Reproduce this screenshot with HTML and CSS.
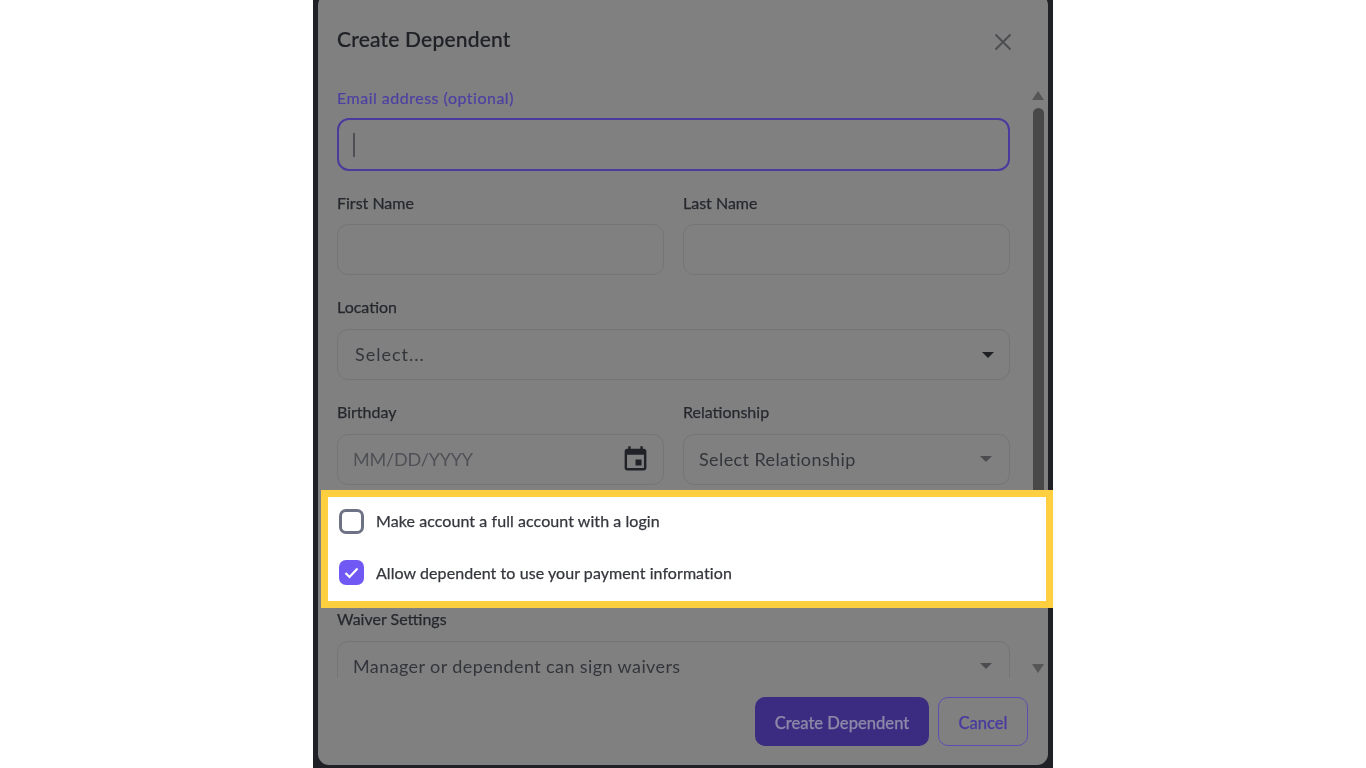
FILE: index.html
```html
<!DOCTYPE html>
<html lang="en">
<head>
    <meta charset="UTF-8">
    <meta name="viewport" content="width=device-width, initial-scale=1.0">
    <title>Create Dependent</title>
    <link rel="stylesheet" href="styles.css">
</head>
<body>
    <div class="backdrop">
        <div class="modal">
            <div class="modal-header">
                <h1 class="modal-title">Create Dependent</h1>
                <svg class="close-icon" viewBox="0 0 18 18" aria-label="Close">
                    <path d="M1.5 1.5l15 15M16.5 1.5l-15 15"/>
                </svg>
            </div>

            <div class="modal-body">
                <form class="form">
                    <div class="field">
                        <label class="label label-active">Email address (optional)</label>
                        <div class="input input-active"><span class="cursor"></span></div>
                    </div>

                    <div class="field-row">
                        <div class="field">
                            <label class="label">First Name</label>
                            <div class="input"></div>
                        </div>
                        <div class="field">
                            <label class="label">Last Name</label>
                            <div class="input"></div>
                        </div>
                    </div>

                    <div class="field">
                        <label class="label label-wide">Location</label>
                        <div class="input input-location">
                            <span class="value">Select...</span>
                            <span class="caret caret-dark"></span>
                        </div>
                    </div>

                    <div class="field-row">
                        <div class="field">
                            <label class="label label-wide">Birthday</label>
                            <div class="input">
                                <span class="value value-date">MM/DD/YYYY</span>
                                <svg class="calendar-icon" viewBox="0 0 24 24">
                                    <path d="M17 12h-5v5h5v-5zM16 1v2H8V1H6v2H5c-1.11 0-1.99.9-1.99 2L3 19c0 1.1.89 2 2 2h14c1.1 0 2-.9 2-2V5c0-1.1-.9-2-2-2h-1V1h-2zm3 18H5V8h14v11z"/>
                                </svg>
                            </div>
                        </div>
                        <div class="field">
                            <label class="label label-wide">Relationship</label>
                            <div class="input">
                                <span class="value">Select Relationship</span>
                                <span class="caret"></span>
                            </div>
                        </div>
                    </div>

                    <div class="checks-space"></div>

                    <div class="field">
                        <label class="label label-wide">Waiver Settings</label>
                        <div class="input">
                            <span class="value">Manager or dependent can sign waivers</span>
                            <span class="caret"></span>
                        </div>
                    </div>
                </form>

                <div class="scrollbar">
                    <span class="arrow-up"></span>
                    <span class="thumb"></span>
                    <span class="arrow-down"></span>
                </div>
            </div>

            <div class="modal-footer">
                <button class="btn btn-primary">Create Dependent</button>
                <button class="btn btn-cancel">Cancel</button>
            </div>
        </div>

        <div class="highlight">
            <div class="check-row">
                <span class="checkbox"></span>
                <span class="check-label check-label-first">Make account a full account with a login</span>
            </div>
            <div class="check-row">
                <span class="checkbox checkbox-on">
                    <svg viewBox="0 0 25 25"><path d="M6.5 13l4 4 8-8.5"/></svg>
                </span>
                <span class="check-label">Allow dependent to use your payment information</span>
            </div>
        </div>
    </div>
</body>
</html>
```

FILE: styles.css
```css
* {
    box-sizing: border-box;
}

body {
    display: flex;
    justify-content: center;
    height: 100vh;
    margin: 0;
    overflow: hidden;
    background-color: #fff;
    font-family: "Lato", "Liberation Sans", sans-serif;
    color: #24262c;
}

.backdrop {
    position: relative;
    width: 740px;
    height: 768px;
    padding: 0 5px;
    overflow: hidden;
    background-color: #1f2126;
    filter: blur(0.4px);
}

.modal {
    display: flex;
    flex-direction: column;
    width: 730px;
    height: 771px;
    margin-top: -6px;
    border-radius: 11px;
    background-color: #808080;
}

.modal-header {
    display: flex;
    justify-content: space-between;
    height: 91px;
    padding: 32px 36px 0 19px;
}

.modal-title {
    margin: 0;
    font-size: 21px;
    line-height: 26px;
    font-weight: 500;
    letter-spacing: 0.2px;
    color: #1f2126;
    -webkit-text-stroke: 0.2px #1f2126;
}

.close-icon {
    width: 18px;
    height: 18px;
    margin-top: 7px;
    fill: none;
    stroke: #4d4e52;
    stroke-width: 2;
}

.modal-body {
    display: flex;
    height: 593px;
    overflow: hidden;
}

.form {
    display: flex;
    flex-direction: column;
    flex: none;
    gap: 22px;
    width: 692px;
    padding: 3px 0 0 19px;
}

.field-row {
    display: grid;
    grid-template-columns: 327px 327px;
    gap: 19px;
}

.label {
    display: block;
    margin-bottom: 11px;
    font-size: 16px;
    line-height: 20px;
    color: #26282e;
    -webkit-text-stroke: 0.25px #26282e;
}

.label-wide {
    margin-bottom: 12px;
}

.label-active {
    margin-bottom: 10px;
    letter-spacing: 0.5px;
    color: #4d3fa3;
    -webkit-text-stroke: 0.2px #4d3fa3;
}

.input {
    display: flex;
    flex: none;
    justify-content: space-between;
    align-items: center;
    height: 51px;
    padding: 0 17px 2px 15px;
    border: 1px solid #757575;
    border-radius: 11px;
}

.input-active {
    height: 53px;
    padding: 0 15px 0 14px;
    border: 2px solid #4a3a9e;
    border-radius: 12px;
}

.input-location {
    padding: 0 15px 2px 17px;
}

.input-location .value {
    letter-spacing: 1px;
}

.cursor {
    width: 2px;
    height: 24px;
    background-color: #4f4f55;
}

.value {
    font-size: 18px;
    letter-spacing: 0.4px;
    color: #33353b;
}

.value-date {
    color: #4f5056;
    letter-spacing: -0.2px;
}

.caret {
    width: 0;
    height: 0;
    border-left: 6px solid transparent;
    border-right: 6px solid transparent;
    border-top: 6px solid #4c4c50;
}

.caret-dark {
    margin-top: 2px;
    border-top-color: #1f2024;
}

.calendar-icon {
    width: 29px;
    height: 29px;
    margin: 2px -4px 0 0;
    fill: #202227;
}

.checks-space {
    flex: none;
    height: 80px;
}

.scrollbar {
    display: flex;
    flex-direction: column;
    align-items: center;
    flex: none;
    width: 12px;
    margin-left: 22px;
    padding-top: 6px;
}

.arrow-up {
    flex: none;
    border-left: 6px solid transparent;
    border-right: 6px solid transparent;
    border-bottom: 9px solid #565656;
}

.arrow-down {
    flex: none;
    margin-top: 144px;
    border-left: 6px solid transparent;
    border-right: 6px solid transparent;
    border-top: 9px solid #565656;
}

.thumb {
    flex: none;
    width: 11px;
    height: 412px;
    margin-top: 8px;
    border-radius: 6px;
    background-color: #484848;
}

.modal-footer {
    display: flex;
    justify-content: flex-end;
    gap: 9px;
    padding: 19px 20px 0 0;
}

.btn {
    height: 49px;
    padding: 2px 0 0;
    border-radius: 10px;
    font-family: inherit;
    font-size: 16.6px;
    font-weight: 500;
}

.btn-primary {
    width: 174px;
    border: none;
    background-color: #3b2c82;
    color: #8d88a8;
    -webkit-text-stroke: 0.25px #8d88a8;
}

.btn-cancel {
    width: 90px;
    border: 1.5px solid #5d4fb0;
    background-color: transparent;
    color: #4a3c9f;
    -webkit-text-stroke: 0.25px #4a3c9f;
}

.highlight {
    position: absolute;
    top: 490px;
    left: 8px;
    display: flex;
    flex-direction: column;
    gap: 26px;
    width: 732px;
    height: 118px;
    padding: 12px 0 0 11px;
    border: 7px solid #ffcf40;
    background-color: #fff;
}

.check-row {
    display: flex;
    align-items: center;
    gap: 12px;
    height: 25px;
}

.checkbox {
    display: flex;
    flex: none;
    width: 25px;
    height: 25px;
    border: 3px solid #6d7284;
    border-radius: 7px;
}

.checkbox-on {
    border: none;
    background-color: #7058f5;
}

.checkbox-on svg {
    width: 25px;
    height: 25px;
    fill: none;
    stroke: #fff;
    stroke-width: 2.2;
}

.check-label {
    margin-top: -1px;
    font-size: 16px;
    letter-spacing: 0.07px;
    color: #35373e;
    -webkit-text-stroke: 0.25px #35373e;
}

.check-label-first {
    margin-top: -3px;
}
```
